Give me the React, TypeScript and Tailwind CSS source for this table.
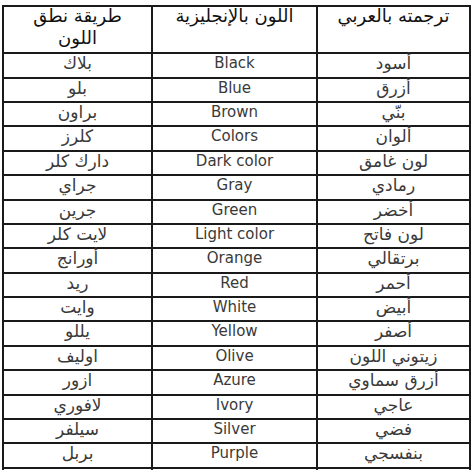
import React from "react";

const rows: [string, string, string][] = [
  ["أسود", "Black", "بلاك"],
  ["أزرق", "Blue", "بلو"],
  ["بنّي", "Brown", "براون"],
  ["ألوان", "Colors", "كلرز"],
  ["لون غامق", "Dark color", "دارك كلر"],
  ["رمادي", "Gray", "جراي"],
  ["أخضر", "Green", "جرين"],
  ["لون فاتح", "Light color", "لايت كلر"],
  ["برتقالي", "Orange", "أورانج"],
  ["أحمر", "Red", "ريد"],
  ["أبيض", "White", "وايت"],
  ["أصفر", "Yellow", "يللو"],
  ["زيتوني اللون", "Olive", "اوليف"],
  ["أزرق سماوي", "Azure", "ازور"],
  ["عاجي", "Ivory", "لافوري"],
  ["فضي", "Silver", "سيلفر"],
  ["بنفسجي", "Purple", "بربل"],
];

const App = () => {
  return (
    <div className="w-[474px] h-[470px] overflow-hidden bg-white" style={{ fontFamily: '"DejaVu Sans", "Noto Sans Arabic", sans-serif' }}>
      <div dir="rtl" className="ml-[2px] mt-[5px] w-[469px] border-t-2 border-l-2 border-r-2 border-[#1a1a1a]">
        <div className="grid grid-cols-[153px_165px_1fr] h-[47.3px] border-b-2 border-[#1a1a1a] text-[18px] leading-[22px] text-[#111]">
          <div className="border-l-2 border-[#1a1a1a] text-center">
            <div className="-mt-[2px]">ترجمته بالعربي</div>
          </div>
          <div className="border-l-2 border-[#1a1a1a] text-center">
            <div className="-mt-[2px]">اللون بالإنجليزية</div>
          </div>
          <div className="text-center">
            <div className="-mt-[2px]">طريقة نطق<br />اللون</div>
          </div>
        </div>
        {rows.map((r, i) => (
          <div key={i} className="grid grid-cols-[153px_165px_1fr] h-[24.38px] border-b-2 border-[#1a1a1a] text-[#3a3a3a] leading-[17px]">
            <div className="border-l-2 border-[#1a1a1a] text-center text-[17px] pt-[1px]">{r[0]}</div>
            <div className="border-l-2 border-[#1a1a1a] text-center text-[15px] pt-[1px]" dir="ltr">{r[1]}</div>
            <div className="text-center text-[17px] pt-[1px]">{r[2]}</div>
          </div>
        ))}
        <div className="grid grid-cols-[153px_165px_1fr] h-[24px]">
          <div className="border-l-2 border-[#1a1a1a]"></div>
          <div className="border-l-2 border-[#1a1a1a]"></div>
          <div></div>
        </div>
      </div>
    </div>
  );
};

export default App;
